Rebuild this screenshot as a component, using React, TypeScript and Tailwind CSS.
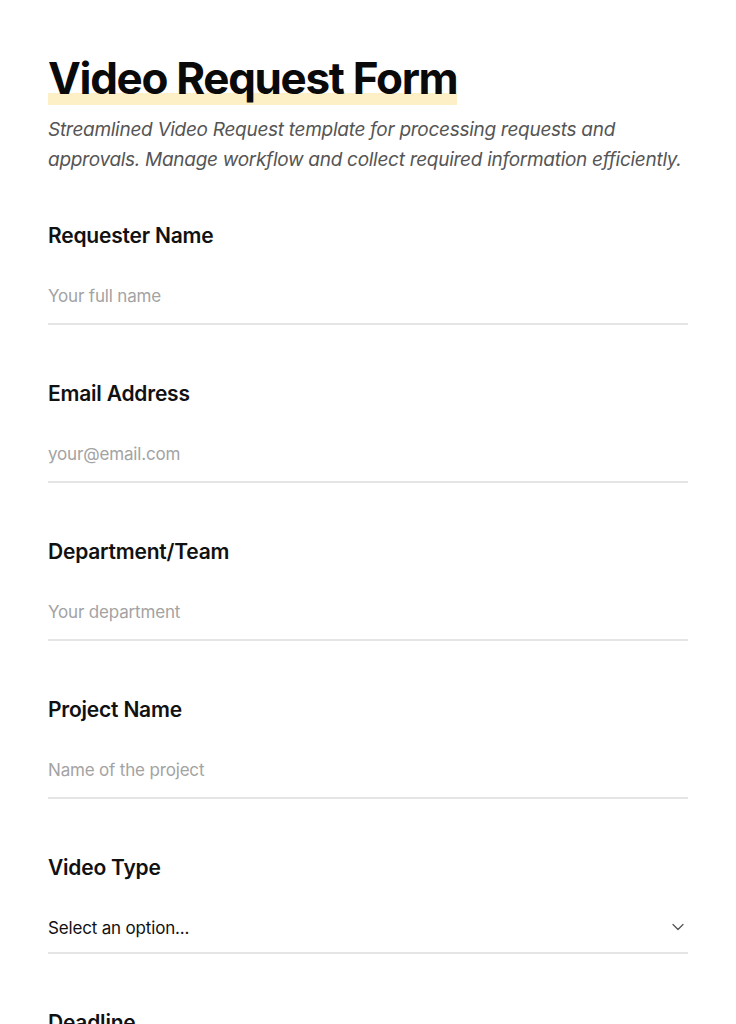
import { ChevronDown } from 'lucide-react';

const fields = [
  { label: 'Requester Name', placeholder: 'Your full name' },
  { label: 'Email Address', placeholder: 'your@email.com' },
  { label: 'Department/Team', placeholder: 'Your department' },
  { label: 'Project Name', placeholder: 'Name of the project' },
];

const labelCls = 'block text-[21px] leading-[28px] font-semibold tracking-[-0.01em] text-[#111] mb-[23px]';
const inputCls =
  'w-full h-[52px] pt-3 pb-4 text-[17px] leading-[24px] tracking-[-0.01em] text-[#111] placeholder:text-[#a3a3a3] border-b-2 border-[#e5e5e5] outline-none bg-transparent';

function TextField({ label, placeholder }: { label: string; placeholder: string }) {
  return (
    <div className="mb-[55px]">
      <label className={labelCls}>{label}</label>
      <input type="text" placeholder={placeholder} className={inputCls} />
    </div>
  );
}

export default function App() {
  return (
    <div className="min-h-screen bg-white font-['Inter',sans-serif]">
      <div className="px-12 pt-[52px] max-w-[736px]">
        {/* Header */}
        <h1 className="text-[44px] leading-[53px] font-bold tracking-[-0.03em] text-[#0a0a0a]">
          <span className="bg-[linear-gradient(to_top,#fdf0c6_12px,transparent_12px)]">Video Request Form</span>
        </h1>
        <p className="mt-[10px] w-[660px] text-[19px] leading-[30px] italic tracking-[-0.015em] text-[#555]">
          Streamlined Video Request template for processing requests and approvals. Manage workflow and collect required
          information efficiently.
        </p>

        {/* Fields */}
        <form className="mt-[47px]">
          {fields.map((f) => (
            <TextField key={f.label} label={f.label} placeholder={f.placeholder} />
          ))}

          <div className="mb-[55px]">
            <label className={labelCls}>Video Type</label>
            <div className="relative">
              <select className="w-full h-[49px] pt-[11px] pb-[14px] text-[17px] leading-[24px] tracking-[-0.01em] text-[#111] border-b-2 border-[#e5e5e5] outline-none bg-transparent appearance-none">
                <option>Select an option...</option>
              </select>
              <ChevronDown
                className="absolute right-0 top-[12px] w-5 h-5 text-[#555] pointer-events-none"
                strokeWidth={1.5}
              />
            </div>
          </div>

          <div className="mb-[55px]">
            <label className={labelCls}>Deadline</label>
            <input type="text" placeholder="Select a date" className={inputCls} />
          </div>
        </form>
      </div>
    </div>
  );
}
